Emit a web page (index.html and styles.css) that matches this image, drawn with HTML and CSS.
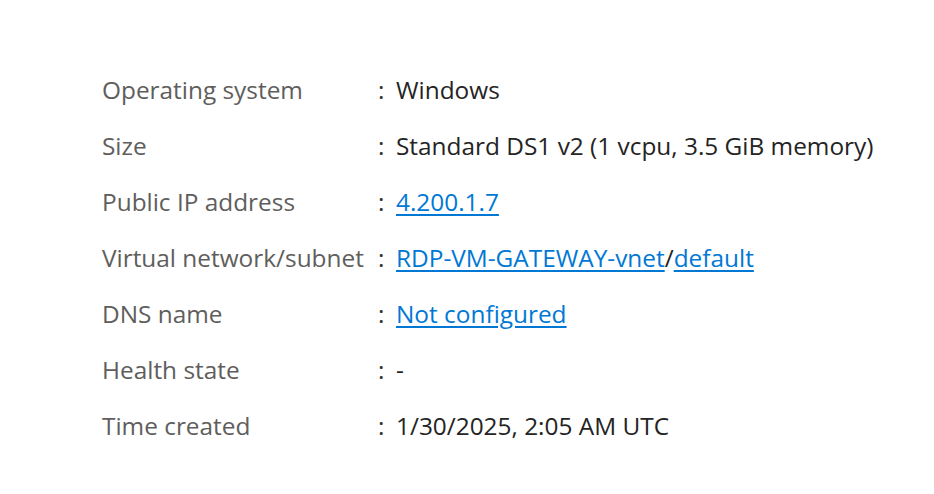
FILE: index.html
```html
<!DOCTYPE html>
<html>
<head>
    <meta name="viewport" content="width=device-width, initial-scale=1.0">
    <link rel="stylesheet" href="styles.css">
</head>
<body>
    <div class="props">
        <div class="row">
            <div class="label">Operating system</div>
            <div class="sep">:</div>
            <div class="value">Windows</div>
        </div>
        <div class="row">
            <div class="label">Size</div>
            <div class="sep">:</div>
            <div class="value">Standard DS1 v2 (1 vcpu, 3.5 GiB memory)</div>
        </div>
        <div class="row">
            <div class="label">Public IP address</div>
            <div class="sep">:</div>
            <div class="value"><a href="#">4.200.1.7</a></div>
        </div>
        <div class="row">
            <div class="label">Virtual network/subnet</div>
            <div class="sep">:</div>
            <div class="value"><a href="#">RDP-VM-GATEWAY-vnet</a>/<a href="#">default</a></div>
        </div>
        <div class="row">
            <div class="label">DNS name</div>
            <div class="sep">:</div>
            <div class="value"><a href="#">Not configured</a></div>
        </div>
        <div class="row">
            <div class="label">Health state</div>
            <div class="sep">:</div>
            <div class="value">-</div>
        </div>
        <div class="row">
            <div class="label">Time created</div>
            <div class="sep">:</div>
            <div class="value">1/30/2025, 2:05 AM UTC</div>
        </div>
    </div>
</body>
</html>
```

FILE: styles.css
```css
body {
    margin: 0;
    background-color: #ffffff;
    font-family: "Open Sans", "Noto Sans", sans-serif;
    font-size: 24.4px;
}

.props {
    padding: 61px 0 0 102px;
    display: flex;
    flex-direction: column;
}

.row {
    display: flex;
    align-items: center;
    height: 56px;
}

.label {
    width: 276px;
    color: #605e5c;
}

.sep {
    width: 18px;
    color: #323130;
}

.value {
    color: #242424;
}

.value a {
    color: #0078d4;
    text-decoration: underline;
    text-underline-offset: 3px;
}
```
